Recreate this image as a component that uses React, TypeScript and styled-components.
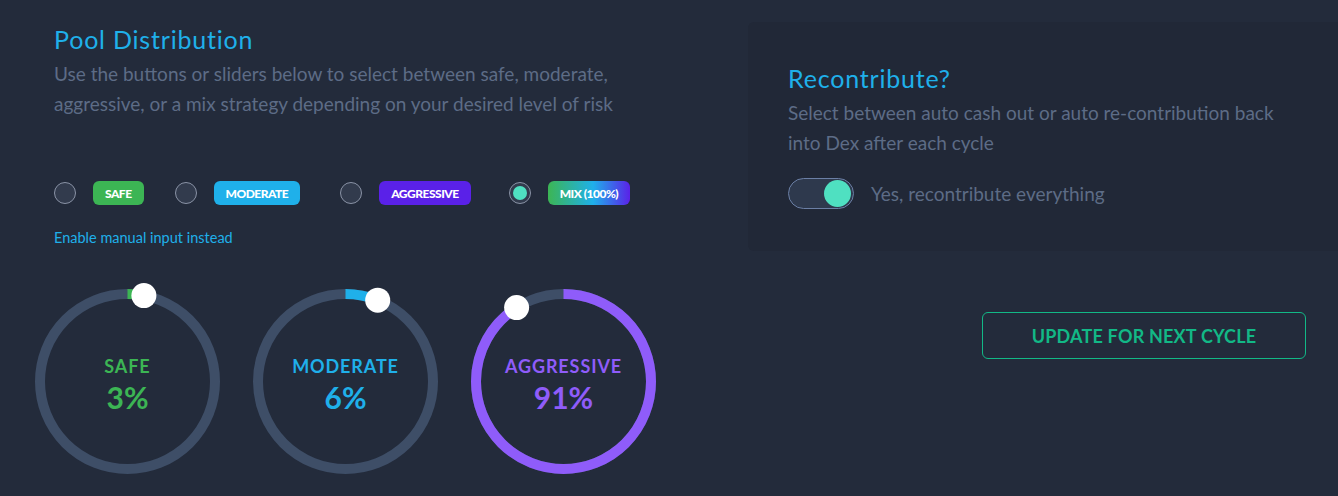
import React from 'react';
import styled, { createGlobalStyle } from 'styled-components';

const GlobalStyle = createGlobalStyle`
  html, body {
    margin: 0;
    padding: 0;
    background: #232b3b;
    overflow: hidden;
  }
  body {
    font-family: Lato, "Open Sans", sans-serif;
  }
`;

const Page = styled.div`
  display: flex;
  width: 1338px;
  height: 496px;
  background: #232b3b;
  overflow: hidden;
`;

const LeftColumn = styled.div`
  width: 694px;
  padding: 24px 0 0 54px;
  flex-shrink: 0;
`;

const Title = styled.h2`
  margin: 0;
  font-size: 25px;
  line-height: 30px;
  font-weight: 400;
  color: #1fb0ea;
  letter-spacing: 0.8px;
`;

const Description = styled.p`
  margin: 5px 0 0;
  font-size: 19px;
  line-height: 30px;
  color: #5d6c86;
`;

const StrategyRow = styled.div`
  display: flex;
  align-items: center;
  margin-top: 62px;
  height: 24px;
`;

const StrategyOption = styled.label<{ $gap: number }>`
  display: flex;
  align-items: center;
  gap: 17px;
  margin-right: ${(p) => p.$gap}px;
  cursor: pointer;
`;

const Radio = styled.span<{ $checked?: boolean }>`
  width: 20px;
  height: 20px;
  border-radius: 50%;
  border: 1px solid #8a93a6;
  background: #323b4d;
  display: flex;
  align-items: center;
  justify-content: center;

  &::after {
    content: '';
    display: ${(p) => (p.$checked ? 'block' : 'none')};
    width: 14px;
    height: 14px;
    border-radius: 50%;
    background: #4fe0c1;
  }
`;

const Badge = styled.span<{ $bg: string }>`
  height: 24px;
  padding: 0 12px;
  border-radius: 6px;
  background: ${(p) => p.$bg};
  color: #ffffff;
  font-size: 12px;
  font-weight: 900;
  display: flex;
  align-items: center;
  letter-spacing: -0.5px;
`;

const ManualLink = styled.a`
  display: block;
  margin-top: 23px;
  font-size: 14.5px;
  line-height: 20px;
  color: #1fb0ea;
  text-decoration: none;
  cursor: pointer;
`;

const RingRow = styled.div`
  display: flex;
  gap: 17px;
  margin: 33px 0 0 -27px;
`;

const RingBox = styled.div`
  position: relative;
  width: 201px;
  height: 201px;
`;

const RingText = styled.div<{ $color: string }>`
  position: absolute;
  inset: 0;
  padding-top: 7px;
  display: flex;
  flex-direction: column;
  align-items: center;
  justify-content: center;
  color: ${(p) => p.$color};
`;

const RingLabel = styled.div`
  font-size: 18px;
  font-weight: 700;
  letter-spacing: 0.9px;
  line-height: 24px;
`;

const RingValue = styled.div`
  font-size: 30px;
  font-weight: 700;
  line-height: 38px;
`;

const RightColumn = styled.div`
  flex: 1;
  display: flex;
  flex-direction: column;
  padding-top: 22px;
`;

const Card = styled.div`
  width: 640px;
  background: #212837;
  border-radius: 6px;
  padding: 41px 40px 42px;
  box-sizing: border-box;
`;

const CardTitle = styled.h3`
  margin: 0;
  font-size: 25px;
  line-height: 30px;
  font-weight: 400;
  color: #1fb0ea;
  letter-spacing: 0.8px;
`;

const ToggleRow = styled.div`
  display: flex;
  align-items: center;
  gap: 17px;
  margin-top: 20px;
`;

const Toggle = styled.span<{ $on?: boolean }>`
  width: 66px;
  height: 31px;
  box-sizing: border-box;
  border-radius: 16px;
  border: 1px solid #6b7fa5;
  background: #2e394d;
  display: flex;
  align-items: center;
  justify-content: ${(p) => (p.$on ? 'flex-end' : 'flex-start')};
  padding: 0 2px;

  &::after {
    content: '';
    width: 27px;
    height: 27px;
    border-radius: 50%;
    background: #4fe0c1;
  }
`;

const ToggleLabel = styled.span`
  font-size: 19px;
  color: #5d6c86;
`;

const UpdateButton = styled.button`
  align-self: flex-start;
  margin: 61px 0 0 234px;
  width: 324px;
  height: 47px;
  border: 1px solid #12b886;
  border-radius: 6px;
  background: transparent;
  color: #12b886;
  font-family: inherit;
  font-size: 18px;
  font-weight: 700;
  letter-spacing: 0.2px;
  padding-top: 2px;
  cursor: pointer;
`;

type Ring = { label: string; value: number; color: string };

const rings: Ring[] = [
  { label: 'SAFE', value: 3, color: '#3cb554' },
  { label: 'MODERATE', value: 6, color: '#1fb0ea' },
  { label: 'AGGRESSIVE', value: 91, color: '#8f5cfa' },
];

const strategies = [
  { label: 'SAFE', bg: '#3cb554', gap: 31 },
  { label: 'MODERATE', bg: '#1fb0ea', gap: 40 },
  { label: 'AGGRESSIVE', bg: '#5a21e8', gap: 38 },
  { label: 'MIX (100%)', bg: 'linear-gradient(90deg, #3cb554 0%, #1fb0ea 55%, #5a21e8 100%)', gap: 0, checked: true },
];

const SliderRing: React.FC<Ring> = ({ label, value, color }) => {
  const c = 100.5;
  const r = 87.5;
  const circ = 2 * Math.PI * r;
  const angle = (value / 100) * 2 * Math.PI;
  const kx = c + r * Math.sin(angle);
  const ky = c - r * Math.cos(angle);
  return (
    <RingBox>
      <svg width="201" height="201" viewBox="0 0 201 201">
        <circle cx={c} cy={c} r={r} fill="none" stroke="#3e4e67" strokeWidth="10" />
        <circle
          cx={c}
          cy={c}
          r={r}
          fill="none"
          stroke={color}
          strokeWidth="10"
          strokeDasharray={`${(value / 100) * circ} ${circ}`}
          transform={`rotate(-90 ${c} ${c})`}
        />
        <circle cx={kx} cy={ky} r="12.5" fill="#ffffff" />
      </svg>
      <RingText $color={color}>
        <RingLabel>{label}</RingLabel>
        <RingValue>{value}%</RingValue>
      </RingText>
    </RingBox>
  );
};

export default function App() {
  return (
    <Page>
      <GlobalStyle />
      <LeftColumn>
        <Title>Pool Distribution</Title>
        <Description>
          Use the buttons or sliders below to select between safe, moderate,
          <br />
          aggressive, or a mix strategy depending on your desired level of risk
        </Description>
        <StrategyRow>
          {strategies.map((s) => (
            <StrategyOption key={s.label} $gap={s.gap}>
              <Radio $checked={s.checked} />
              <Badge $bg={s.bg}>{s.label}</Badge>
            </StrategyOption>
          ))}
        </StrategyRow>
        <ManualLink>Enable manual input instead</ManualLink>
        <RingRow>
          {rings.map((r) => (
            <SliderRing key={r.label} {...r} />
          ))}
        </RingRow>
      </LeftColumn>
      <RightColumn>
        <Card>
          <CardTitle>Recontribute?</CardTitle>
          <Description>
            Select between auto cash out or auto re-contribution back
            <br />
            into Dex after each cycle
          </Description>
          <ToggleRow>
            <Toggle $on />
            <ToggleLabel>Yes, recontribute everything</ToggleLabel>
          </ToggleRow>
        </Card>
        <UpdateButton>UPDATE FOR NEXT CYCLE</UpdateButton>
      </RightColumn>
    </Page>
  );
}
